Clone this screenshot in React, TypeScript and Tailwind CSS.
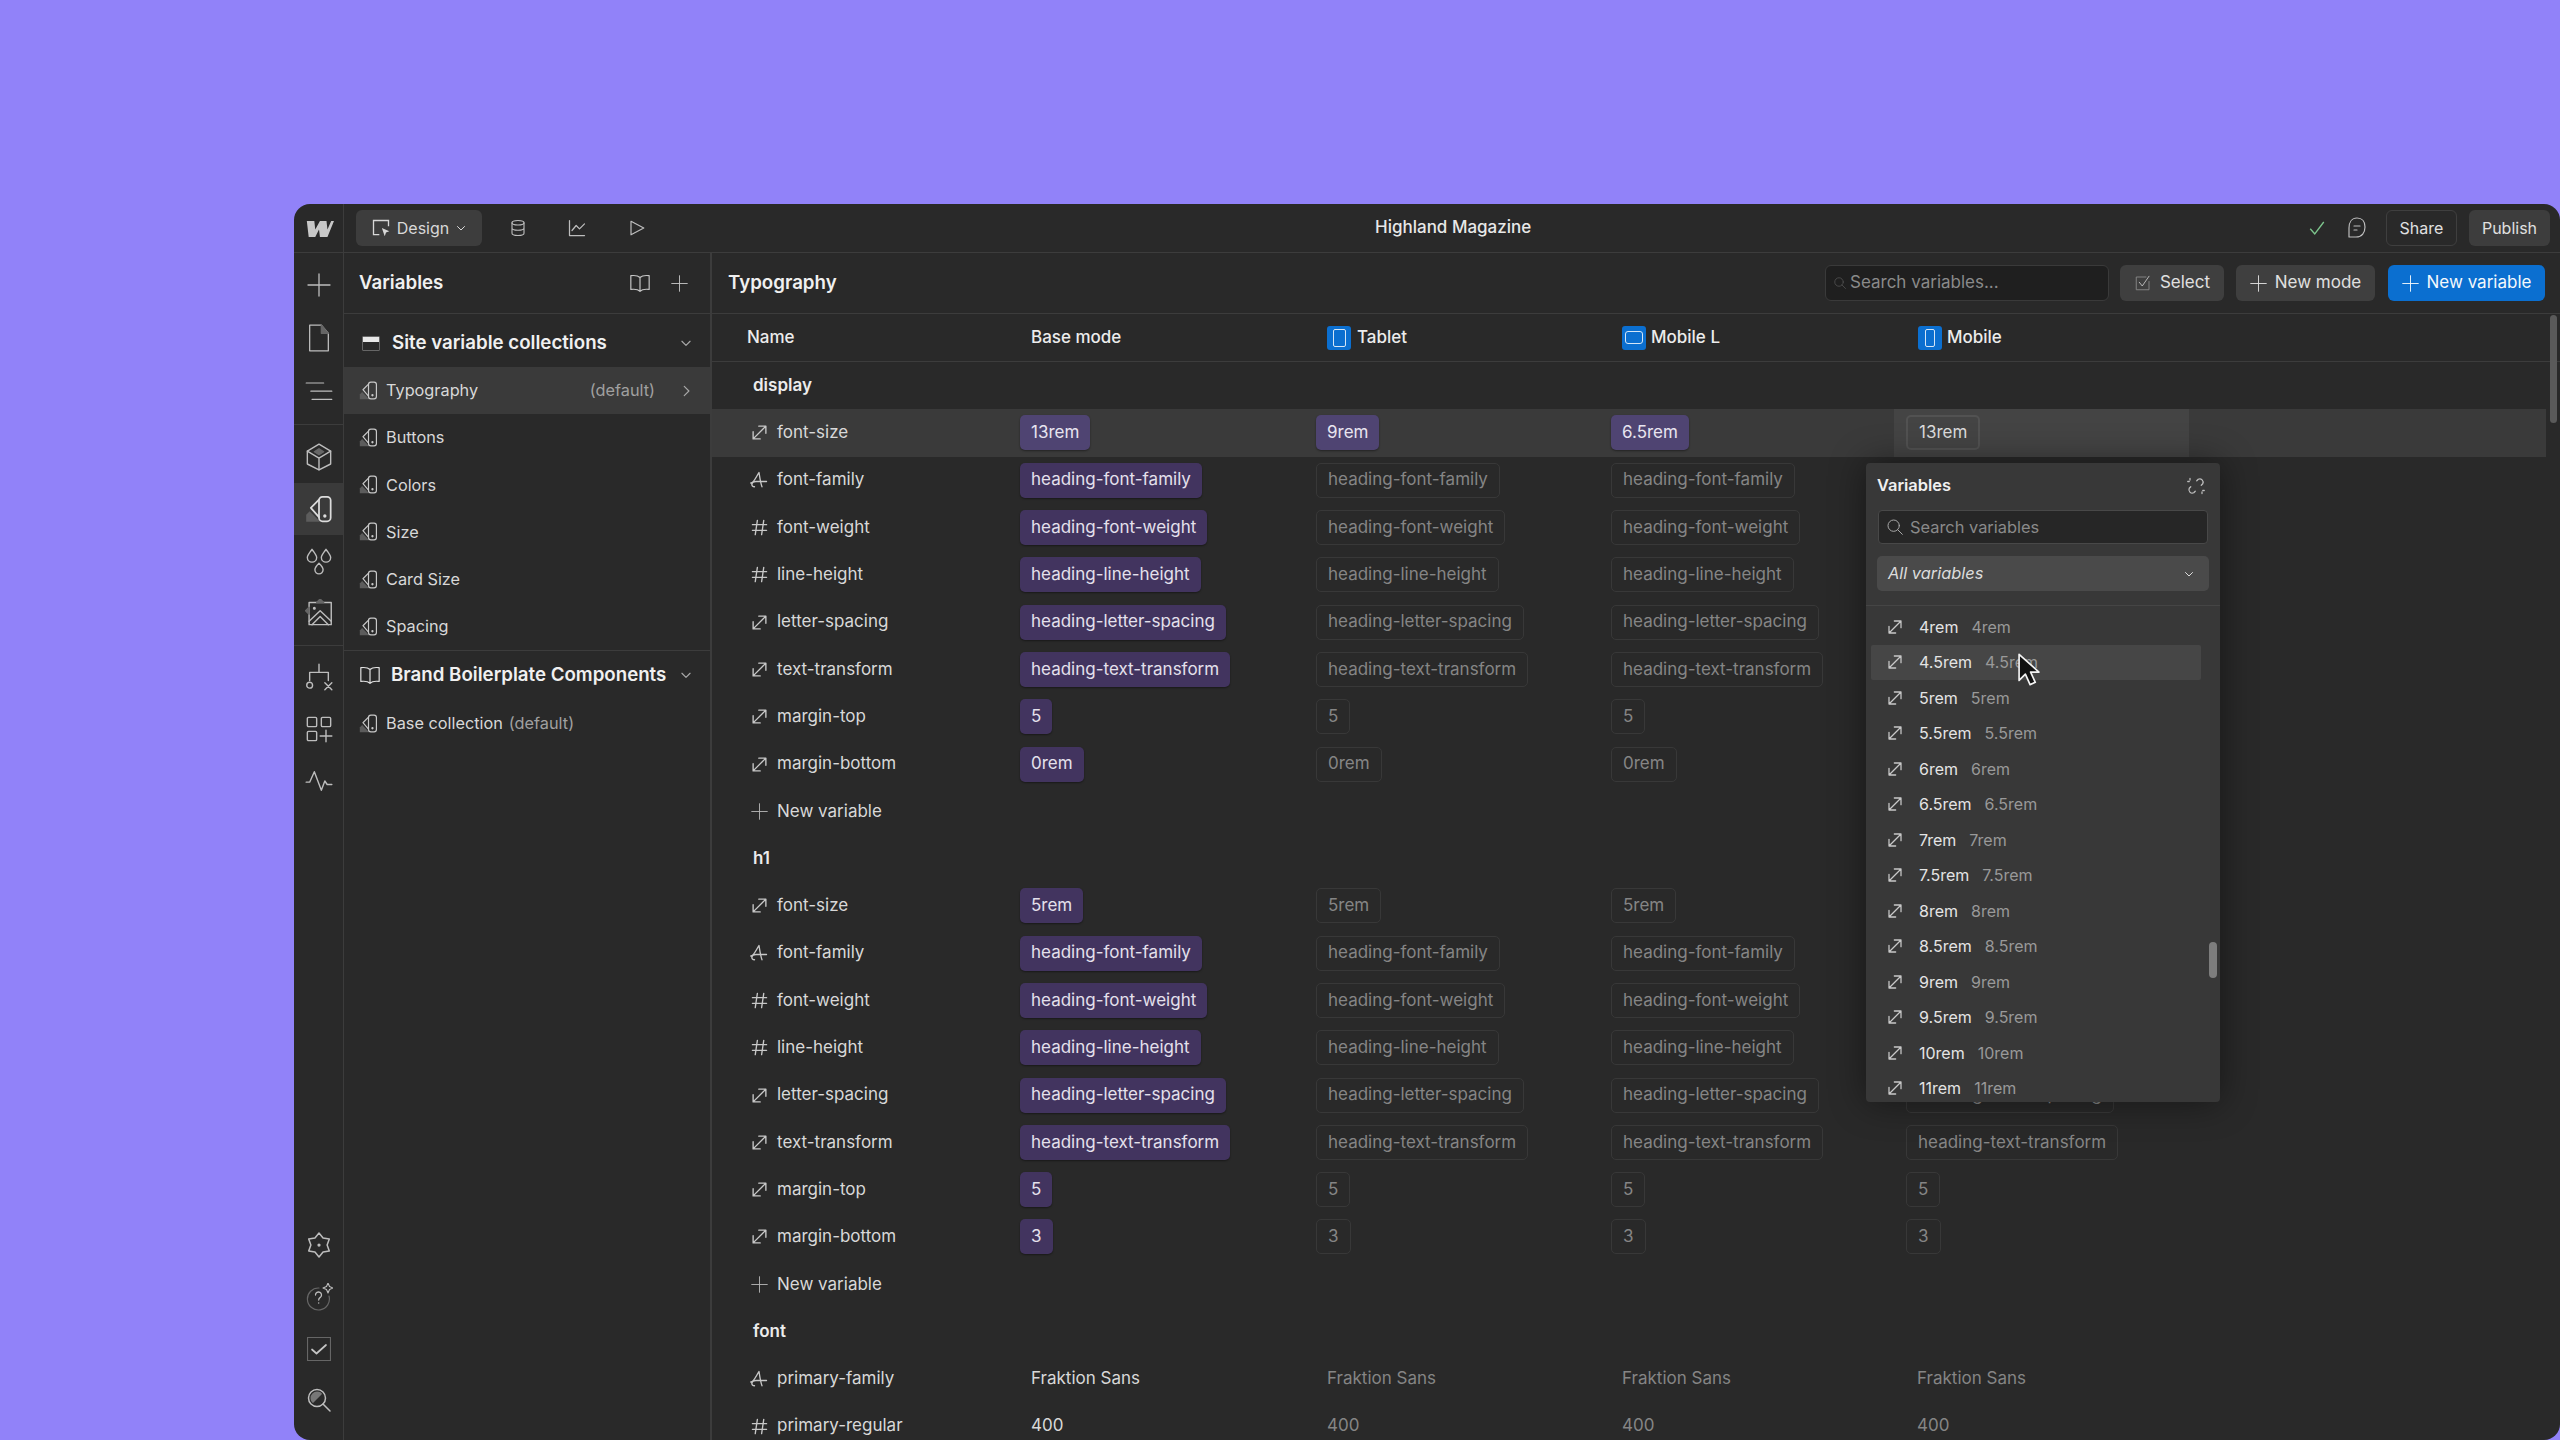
import { ReactNode } from 'react';

type IconProps = { className?: string };

const Svg = ({ className = 'w-6 h-6', sw = 1.3, children }: { className?: string; sw?: number; children: ReactNode }) => (
  <svg viewBox="0 0 24 24" fill="none" stroke="currentColor" strokeWidth={sw} strokeLinecap="round" strokeLinejoin="round" className={className}>
    {children}
  </svg>
);

const PlusIcon = ({ className }: IconProps) => (
  <Svg className={className}><path d="M12 1v22M1 12h22" /></Svg>
);
const ChevronDown = ({ className = 'w-3 h-3' }: IconProps) => (
  <Svg className={className} sw={2}><path d="M5 9l7 7 7-7" /></Svg>
);
const ChevronRight = ({ className = 'w-3 h-3' }: IconProps) => (
  <Svg className={className} sw={2}><path d="M9 4l8 8-8 8" /></Svg>
);
const SizeIcon = ({ className = 'w-[17px] h-[17px]' }: IconProps) => (
  <Svg className={className} sw={1.9}><path d="M3 21L21 3M11 3h10v10M3 11v10h10" /></Svg>
);
const FontIcon = ({ className = 'w-[18px] h-[18px]' }: IconProps) => (
  <Svg className={className} sw={1.8}><path d="M1 16c4 0 6-6 11-14 1 6 2 14 4 19M6 21c-5 0-5-7 2-7h14" /></Svg>
);
const HashIcon = ({ className = 'w-[17px] h-[17px]' }: IconProps) => (
  <Svg className={className} sw={1.9}><path d="M2 8h20M2 16h20M9 2L6 22M18 2l-3 20" /></Svg>
);
const SwatchIcon = ({ className = 'w-[19px] h-[19px]' }: IconProps) => (
  <Svg className={className} sw={1.5}>
    <path d="M1 23v-6l3-3 9 9z" fill="#5c5c5c" stroke="none" />
    <rect x="12" y="1.500" width="10" height="21" rx="3" />
    <path d="M12 4L5 11l7 8" />
    <circle cx="17" cy="18" r="0.7" fill="currentColor" />
  </Svg>
);
const BookIcon = ({ className = 'w-[22px] h-[22px]' }: IconProps) => (
  <Svg className={className}><path d="M12 6C10 4 6 3.500 2 4v15c4-.5 8 0 10 2 2-2 6-2.500 10-2V4c-4-.5-8 0-10 2zM12 6v15" /></Svg>
);
const CursorRect = ({ className = 'w-5 h-5' }: IconProps) => (
  <svg viewBox="0 0 24 24" fill="none" className={className}>
    <path d="M10 20H3V3h18v7" stroke="currentColor" strokeWidth="1.600" />
    <path d="M13 12l9 4-4 1.500-1.500 4.500z" fill="currentColor" />
  </svg>
);
const DbIcon = ({ className = 'w-[18px] h-[18px]' }: IconProps) => (
  <Svg className={className} sw={1.5}>
    <ellipse cx="12" cy="5" rx="8" ry="3" />
    <path d="M4 5v14c0 1.700 3.600 3 8 3s8-1.300 8-3V5M4 12c0 1.700 3.600 3 8 3s8-1.300 8-3" />
  </Svg>
);
const ChartIcon = ({ className = 'w-[20px] h-[20px]' }: IconProps) => (
  <Svg className={className} sw={1.5}><path d="M3 3v18h18M6 15l5-6 4 4 6-6" /></Svg>
);
const PlayIcon = ({ className = 'w-[18px] h-[18px]' }: IconProps) => (
  <Svg className={className} sw={1.6}><path d="M4 3l17 9-17 9z" /></Svg>
);
const FileIcon = ({ className = 'w-7 h-7' }: IconProps) => (
  <Svg className={className} sw={1.1}>
    <path d="M4 1h10l6 7v15H4z" />
    <path d="M14 1v7h6z" fill="#666" stroke="#666" />
  </Svg>
);
const ListIcon = ({ className = 'w-7 h-7' }: IconProps) => (
  <Svg className={className} sw={1}><path d="M1 6h15M5 13h18M6 20h17" /></Svg>
);
const BoxIcon = ({ className = 'w-7 h-7' }: IconProps) => (
  <Svg className={className} sw={1.2}>
    <path d="M12 1l10 6v11l-10 5-10-5V7z" />
    <path d="M2 7l10 6 10-6M12 13v10" />
    <path d="M12 5l4 2.500-4 2.500-4-2.500z" fill="#666" stroke="#666" />
  </Svg>
);
const DropsIcon = ({ className = 'w-7 h-7' }: IconProps) => (
  <Svg className={className} sw={1.2}>
    <path d="M6 2c-2 3-4 5-4 7a4 4 0 008 0c0-2-2-4-4-7zM18 2c-2 3-4 5-4 7a4 4 0 008 0c0-2-2-4-4-7zM12 14c-2 2-3.500 4-3.500 5.500a3.500 3.500 0 007 0c0-1.500-1.500-3.500-3.500-5.500z" />
  </Svg>
);
const ImageIcon = ({ className = 'w-7 h-7' }: IconProps) => (
  <Svg className={className} sw={1.2}>
    <path d="M3.500 3h19v19h-19z" />
    <path d="M3.500 19L13 10l9.500 9M6 22l7-7 7 7" />
    <circle cx="8" cy="8" r="0.7" fill="currentColor" />
    <path d="M0.500 10l3-3v6zM10 3l3-3 3 3z" fill="#666" stroke="#666" />
  </Svg>
);
const FlowIcon = ({ className = 'w-7 h-7' }: IconProps) => (
  <Svg className={className} sw={1.2}>
    <path d="M12 1v7M4 15v-7h16v7" />
    <circle cx="4" cy="19" r="2.500" />
    <path d="M17 17l6 6M23 17l-6 6" />
  </Svg>
);
const CompsIcon = ({ className = 'w-7 h-7' }: IconProps) => (
  <Svg className={className} sw={1.2}>
    <rect x="2" y="2" width="8" height="8" rx="1" />
    <rect x="14" y="2" width="8" height="8" rx="1" />
    <rect x="2" y="14" width="8" height="8" rx="1" />
    <path d="M18 13v10M13 18h10" />
  </Svg>
);
const PulseIcon = ({ className = 'w-7 h-7' }: IconProps) => (
  <Svg className={className} sw={1.2}><path d="M1 13h3l4-9 6 16 3-8 2 3h4" /></Svg>
);
const GearIcon = ({ className = 'w-[26px] h-[26px]' }: IconProps) => (
  <Svg className={className} sw={1.4}>
    <path d="M12 1l3.750 4.500L21.500 6.500 19.500 12l2 5.500-5.750 1L12 23l-3.750-4.500-5.750-1L4.500 12l-2-5.500 5.750-1z" />
    <circle cx="12" cy="12" r="0.8" fill="currentColor" />
  </Svg>
);
const HelpIcon = ({ className = 'w-7 h-7' }: IconProps) => (
  <svg viewBox="0 0 28 28" fill="none" strokeLinecap="round" strokeLinejoin="round" className={className}>
    <path d="M14 5a11 11 0 1 0 10 8" stroke="#666" strokeWidth="1.200" />
    <path d="M10.500 12a3 3 0 1 1 4.500 2.600c-1 .6-1.300 1.200-1.300 2.400" stroke="#bdbdbd" strokeWidth="1.300" />
    <circle cx="13.700" cy="20" r="0.7" fill="#bdbdbd" />
    <path d="M23 0l1.500 3.500L28 5l-3.500 1.500L23 10l-1.500-3.500L18 5l3.500-1.500z" stroke="#bdbdbd" strokeWidth="1.100" />
  </svg>
);
const CheckBoxIcon = ({ className = 'w-[24px] h-[24px]' }: IconProps) => (
  <Svg className={className} sw={1.2}>
    <rect x="0.500" y="0.500" width="23" height="23" stroke="#666" />
    <path d="M5 12.500l4.500 4L19 8" stroke="#c4c4c4" strokeWidth="1.700" />
  </Svg>
);
const SearchIcon = ({ className = 'w-6 h-6' }: IconProps) => (
  <Svg className={className} sw={1.5}>
    <circle cx="10" cy="10" r="8.500" />
    <path d="M16 16l7 7" />
  </Svg>
);
const ZoomIcon = ({ className = 'w-6 h-6' }: IconProps) => (
  <Svg className={className} sw={1.5}>
    <circle cx="10" cy="10" r="8.500" />
    <path d="M3.500 10a6.500 6.500 0 0 1 6.500-6.500c3 0 4.500 1 5 2.500L6 15c-1.500-1-2.500-3-2.500-5z" fill="#777" stroke="none" />
    <path d="M16 16l7 7" />
  </Svg>
);
const CommentIcon = ({ className = 'w-[24px] h-[24px]' }: IconProps) => (
  <Svg className={className} sw={1.2}>
    <path d="M12 2c5 0 8 3.500 8 9s-3 10-9 10H4v-9c0-6 3-10 8-10z" />
    <path d="M9 10h6M9 14h3" />
  </Svg>
);
const UnlinkIcon = ({ className = 'w-[18px] h-[18px]' }: IconProps) => (
  <Svg className={className} sw={1.7}>
    <path d="M13 5l2-2a4.500 4.500 0 0 1 6 6l-2 2M11 19l-2 2a4.500 4.500 0 0 1-6-6l2-2" />
    <path d="M4 2v2M1 6h2M20 22v-2M23 18h-2" />
  </Svg>
);
const SelectIcon = ({ className = 'w-[18px] h-[18px]' }: IconProps) => (
  <Svg className={className} sw={1.2}>
    <path d="M20 10v11H3V4h13" stroke="#8a8a8a" />
    <path d="M7 11l4 5 9-13" stroke="#c4c4c4" />
  </Svg>
);
const LogoMark = () => (
  <svg viewBox="0 0 32 20" className="h-[19px] w-[30px]" fill="#c8c8c8">
    <path d="M3 2h8l1 9 5-9h7l1 9 4-9h3l-7 17h-8l-1-8-4 8H5z" />
  </svg>
);

const DeviceBadge = ({ kind }: { kind: 'tablet' | 'landscape' | 'mobile' }) => (
  <span className="flex h-6 w-6 items-center justify-center rounded-[3px] bg-[#0b6fd0]">
    {kind === 'tablet' && <span className="h-[18px] w-[13px] rounded-[2px] border-[1.5px] border-[#d4e6f7]" />}
    {kind === 'landscape' && <span className="h-[13px] w-[18px] rounded-[3px] border-[1.5px] border-[#d4e6f7]" />}
    {kind === 'mobile' && <span className="h-[18px] w-[10px] rounded-[2px] border-[1.5px] border-[#d4e6f7]" />}
  </span>
);

type Kind = 'size' | 'font' | 'num';

const TypeIcon = ({ kind }: { kind: Kind }) => (
  <span className="flex w-[18px] shrink-0 justify-center text-[#c8c8c8]">
    {kind === 'size' && <SizeIcon />}
    {kind === 'font' && <FontIcon />}
    {kind === 'num' && <HashIcon />}
  </span>
);

const Pill = ({ text, variant }: { text: string; variant: 'set' | 'setHi' | 'ghost' | 'active' }) => {
  const styles = {
    set: 'bg-[#42345f] text-[#e4e0ec] shadow-[0_1px_2px_rgba(0,0,0,0.4)]',
    setHi: 'bg-[#4f4472] text-[#e8e4f0] shadow-[0_1px_2px_rgba(0,0,0,0.4)]',
    ghost: 'border border-[#383838] text-[#858585]',
    active: 'border-2 border-[#525252] text-[#dcdcdc]',
  };
  return (
    <span className={`inline-flex h-[35px] items-center rounded-[5px] px-[11px] ${styles[variant]}`}>{text}</span>
  );
};

type Row = { name: string; kind: Kind; vals: string[] };

const headingRows = (size: string[], top: string, bottom: string[]): Row[] => [
  { name: 'font-size', kind: 'size', vals: size },
  { name: 'font-family', kind: 'font', vals: Array(4).fill('heading-font-family') },
  { name: 'font-weight', kind: 'num', vals: Array(4).fill('heading-font-weight') },
  { name: 'line-height', kind: 'num', vals: Array(4).fill('heading-line-height') },
  { name: 'letter-spacing', kind: 'size', vals: Array(4).fill('heading-letter-spacing') },
  { name: 'text-transform', kind: 'size', vals: Array(4).fill('heading-text-transform') },
  { name: 'margin-top', kind: 'size', vals: Array(4).fill(top) },
  { name: 'margin-bottom', kind: 'size', vals: bottom },
];

const displayRows = headingRows(['13rem', '9rem', '6.5rem', '13rem'], '5', Array(4).fill('0rem'));
const h1Rows = headingRows(Array(4).fill('5rem'), '5', Array(4).fill('3'));

const GroupRow = ({ label }: { label: string }) => (
  <div className="flex h-[47.3px] items-center pl-[41px] font-semibold text-[#ececec]">{label}</div>
);

const NewVariableRow = () => (
  <div className="flex h-[47.3px] items-center gap-[9px] pl-[38px] text-[#d8d8d8]">
    <span className="flex w-[18px] justify-center text-[#b5b5b5]"><PlusIcon className="h-[17px] w-[17px]" /></span>
    New variable
  </div>
);

const PillRow = ({ row, active }: { row: Row; active?: boolean }) => (
  <div className={`grid h-[47.3px] grid-cols-[308px_296px_295px_295px_1fr] items-center ${active ? 'bg-[#3a3a3a]' : ''}`}>
    <div className="flex items-center gap-[9px] pl-[38px] text-[#d8d8d8]">
      <TypeIcon kind={row.kind} />
      {row.name}
    </div>
    {row.vals.map((v, i) => {
      const isActive = active && i === 3;
      return (
        <div key={i} className={isActive ? '-ml-[12px] flex h-[47.3px] w-[295px] items-center bg-[#444444] pl-[12px]' : ''}>
          <Pill text={v} variant={isActive ? 'active' : i === 0 || active ? (active ? 'setHi' : 'set') : 'ghost'} />
        </div>
      );
    })}
  </div>
);

const PlainRow = ({ name, kind, val }: { name: string; kind: Kind; val: string }) => (
  <div className="grid h-[47.3px] grid-cols-[308px_296px_295px_295px_1fr] items-center">
    <div className="flex items-center gap-[9px] pl-[38px] text-[#d8d8d8]">
      <TypeIcon kind={kind} />
      {name}
    </div>
    <div className="pl-[11px] text-[#d8d8d8]">{val}</div>
    <div className="pl-[11px] text-[#858585]">{val}</div>
    <div className="pl-[11px] text-[#858585]">{val}</div>
    <div className="pl-[11px] text-[#858585]">{val}</div>
  </div>
);

const collections = ['Buttons', 'Colors', 'Size', 'Card Size', 'Spacing'];
const remValues = ['4rem', '4.5rem', '5rem', '5.5rem', '6rem', '6.5rem', '7rem', '7.5rem', '8rem', '8.5rem', '9rem', '9.5rem', '10rem', '11rem'];

export default function App() {
  return (
    <div className="h-[1440px] overflow-hidden bg-[#9182f9] pl-[294px] pt-[204px] text-[17px] [font-family:Inter,sans-serif]">
      <div className="flex h-[1236px] flex-col overflow-hidden rounded-2xl bg-[#292929] text-white">
        {/* top bar */}
        <header className="flex h-[49px] shrink-0 items-center border-b border-[#3c3c3c] text-[16px]">
          <div className="flex h-full w-[50px] shrink-0 items-center justify-center border-r border-[#3c3c3c]"><LogoMark /></div>
          <div className="flex w-[1031px] shrink-0 items-center pl-[12px] text-[#bdbdbd]">
            <div className="flex h-9 w-[126px] items-center justify-center gap-[6px] rounded-md bg-[#3d3d3d] text-[#d8d8d8]">
              <CursorRect />
              Design
              <ChevronDown className="h-3 w-3" />
            </div>
            <span className="ml-[27px]"><DbIcon /></span>
            <span className="ml-[40px]"><ChartIcon /></span>
            <span className="ml-[41px]"><PlayIcon /></span>
          </div>
          <div className="text-[17px] font-medium text-[#e8e8e8]">Highland Magazine</div>
          <div className="ml-auto flex items-center pr-[10px]">
            <svg viewBox="0 0 24 24" fill="none" stroke="#7cc48c" strokeWidth="1.800" className="h-[18px] w-[18px]"><path d="M3 13l6 7L21 4" /></svg>
            <span className="ml-[19px] text-[#bdbdbd]"><CommentIcon /></span>
            <div className="ml-[17px] flex h-9 w-[71px] items-center justify-center rounded-md border border-[#3f3f3f] text-[#e0e0e0]">Share</div>
            <div className="ml-[12px] flex h-9 w-[81px] items-center justify-center rounded-md bg-[#3d3d3d] text-[#e0e0e0]">Publish</div>
          </div>
        </header>

        <div className="flex min-h-0 flex-1">
          {/* icon rail */}
          <nav className="flex w-[50px] shrink-0 flex-col border-r border-[#3c3c3c] text-[#bdbdbd]">
            <div className="flex flex-col border-b border-[#3c3c3c] pb-[7px] pt-[6px]">
              <div className="flex h-[52.5px] items-center justify-center"><PlusIcon className="h-6 w-6" /></div>
              <div className="flex h-[52.5px] items-center justify-center"><FileIcon /></div>
              <div className="flex h-[52.5px] items-center justify-center"><ListIcon /></div>
            </div>
            <div className="flex flex-col border-b border-[#3c3c3c] py-[6px]">
              <div className="flex h-[52px] items-center justify-center"><BoxIcon /></div>
              <div className="flex h-[52px] items-center justify-center bg-[#3a3a3a] text-[#dcdcdc]"><SwatchIcon className="h-7 w-7" /></div>
              <div className="flex h-[52px] items-center justify-center"><DropsIcon /></div>
              <div className="flex h-[52px] items-center justify-center"><ImageIcon /></div>
            </div>
            <div className="flex flex-col py-[5px]">
              <div className="flex h-[52px] items-center justify-center"><FlowIcon /></div>
              <div className="flex h-[52px] items-center justify-center"><CompsIcon /></div>
              <div className="flex h-[52px] items-center justify-center"><PulseIcon /></div>
            </div>
            <div className="mt-auto flex flex-col pb-[14px]">
              <div className="flex h-[52px] items-center justify-center"><GearIcon /></div>
              <div className="flex h-[52px] items-center justify-center"><HelpIcon /></div>
              <div className="flex h-[51px] items-center justify-center"><CheckBoxIcon /></div>
              <div className="flex h-[52px] items-center justify-center"><ZoomIcon /></div>
            </div>
          </nav>

          {/* collections panel */}
          <aside className="flex w-[368px] shrink-0 flex-col border-r-2 border-[#3c3c3c] text-[16.3px]">
            <div className="flex h-[61px] items-center border-b border-[#3c3c3c] pl-[15px] pr-[22px]">
              <span className="text-[18.7px] font-semibold text-[#f0f0f0]">Variables</span>
              <span className="ml-auto text-[#c4c4c4]"><BookIcon /></span>
              <span className="ml-[20px] text-[#c4c4c4]"><PlusIcon className="h-[17px] w-[17px]" /></span>
            </div>
            <div className="flex h-[53px] items-center pl-[18px] pr-[17px] pt-[5px]">
              <span className="flex h-[15px] w-[18px] flex-col rounded-[1px] border border-[#666]"><span className="h-[5px] bg-[#e8e8e8]" /></span>
              <span className="ml-[12px] text-[18.7px] font-semibold text-[#f0f0f0]">Site variable collections</span>
              <ChevronDown className="ml-auto h-[14px] w-[14px] text-[#a8a8a8]" />
            </div>
            <div className="flex h-[47px] items-center bg-[#3a3a3a] pl-[15px] pr-[17px] text-[#d8d8d8]">
              <span className="text-[#c8c8c8]"><SwatchIcon /></span>
              <span className="ml-[8px]">Typography</span>
              <span className="ml-auto text-[#a0a0a0]">(default)</span>
              <ChevronRight className="ml-[24px] h-[14px] w-[14px] text-[#a8a8a8]" />
            </div>
            {collections.map((c) => (
              <div key={c} className="flex h-[47.2px] items-center pl-[15px] text-[#d8d8d8]">
                <span className="text-[#c8c8c8]"><SwatchIcon /></span>
                <span className="ml-[8px]">{c}</span>
              </div>
            ))}
            <div className="flex h-[49px] items-center border-t border-[#3c3c3c] pl-[15px] pr-[17px]">
              <span className="text-[#e0e0e0]"><BookIcon /></span>
              <span className="ml-[10px] text-[18.7px] font-semibold text-[#f0f0f0]">Brand Boilerplate Components</span>
              <ChevronDown className="ml-auto h-[14px] w-[14px] text-[#a8a8a8]" />
            </div>
            <div className="flex h-[49px] items-center pl-[15px] text-[#d8d8d8]">
              <span className="text-[#c8c8c8]"><SwatchIcon /></span>
              <span className="ml-[8px]">Base collection</span>
              <span className="ml-[6px] text-[#a0a0a0]">(default)</span>
            </div>
          </aside>

          {/* variables table */}
          <main className="relative min-w-0 flex-1">
            <div className="flex h-[61px] items-center border-b border-[#3c3c3c] pl-[16px] pr-[15px]">
              <h1 className="text-[18.7px] font-semibold text-[#f0f0f0]">Typography</h1>
              <div className="ml-auto flex h-9 w-[284px] items-center gap-[4px] rounded-md border border-[#3a3a3a] bg-[#1f1f1f] pl-[8px] text-[#8a8a8a]">
                <SearchIcon className="h-3 w-3 text-[#555]" />
                Search variables...
              </div>
              <div className="ml-[11px] flex h-9 w-[104px] items-center justify-center gap-[8px] rounded-md bg-[#3f3f3f] text-[#e0e0e0]"><SelectIcon />Select</div>
              <div className="ml-[12px] flex h-9 w-[139px] items-center justify-center gap-[8px] rounded-md bg-[#3f3f3f] text-[#e0e0e0]"><PlusIcon className="h-[17px] w-[17px]" />New mode</div>
              <div className="ml-[13px] flex h-9 w-[157px] items-center justify-center gap-[8px] rounded-md bg-[#0b6fd0] text-[#f4f8fc]"><PlusIcon className="h-[17px] w-[17px]" />New variable</div>
            </div>
            <div className="grid h-[48px] grid-cols-[308px_296px_295px_295px_1fr] items-center border-b border-[#3c3c3c] font-medium text-[#ececec]">
              <div className="pl-[35px]">Name</div>
              <div className="pl-[11px]">Base mode</div>
              <div className="flex items-center gap-[6px] pl-[11px]"><DeviceBadge kind="tablet" />Tablet</div>
              <div className="flex items-center gap-[5px] pl-[11px]"><DeviceBadge kind="landscape" />Mobile L</div>
              <div className="flex items-center gap-[5px] pl-[12px]"><DeviceBadge kind="mobile" />Mobile</div>
            </div>
            <div className="pr-[14px]">
              <GroupRow label="display" />
              {displayRows.map((r, i) => <PillRow key={r.name} row={r} active={i === 0} />)}
              <NewVariableRow />
              <GroupRow label="h1" />
              {h1Rows.map((r) => <PillRow key={r.name} row={r} />)}
              <NewVariableRow />
              <GroupRow label="font" />
              <PlainRow name="primary-family" kind="font" val="Fraktion Sans" />
              <PlainRow name="primary-regular" kind="num" val="400" />
            </div>

            {/* page scrollbar */}
            <div className="absolute right-[3px] top-[62px] h-[108px] w-[7px] rounded-full bg-[#5a5a5a]" />

            {/* variables popover */}
            <div className="absolute left-[1154px] top-[210px] flex h-[639px] w-[354px] flex-col overflow-hidden rounded-[4px] bg-[#383838] text-[16.4px] shadow-[0_0_36px_rgba(0,0,0,0.45)]">
              <div className="flex h-[47px] shrink-0 items-center justify-between pb-[2px] pl-[11px] pr-[15px]">
                <span className="font-semibold text-[#f0f0f0]">Variables</span>
                <span className="text-[#bdbdbd]"><UnlinkIcon /></span>
              </div>
              <div className="mx-[12px] flex h-[34px] shrink-0 items-center gap-[7px] rounded-[4px] border border-[#484848] bg-[#262626] pl-[8px] text-[#8a8a8a]">
                <SearchIcon className="h-[16px] w-[16px] text-[#a8a8a8]" />
                Search variables
              </div>
              <div className="mx-[11px] mt-[12px] flex h-[35px] shrink-0 items-center justify-between rounded-[5px] bg-[#4a4a4a] pl-[11px] pr-[14px] italic text-[#dcdcdc]">
                All variables
                <ChevronDown className="h-[12px] w-[12px]" />
              </div>
              <div className="mt-[14px] min-h-0 flex-1 border-t border-[#454545] pt-[3px] text-[16px]">
                {remValues.map((v) => (
                  <div key={v} className={`mx-[5px] flex h-[35.5px] w-[330px] items-center rounded-[2px] pl-[16px] ${v === '4.5rem' ? 'bg-[#464646]' : ''}`}>
                    <span className="text-[#c8c8c8]"><SizeIcon className="h-[16px] w-[16px]" /></span>
                    <span className="ml-[16px] text-[#e4e4e4]">{v}</span>
                    <span className="ml-[13px] text-[#999]">{v}</span>
                  </div>
                ))}
              </div>
              <div className="absolute right-[3px] top-[479px] h-[36px] w-[8px] rounded-full bg-[#7d7d7d]" />
            </div>

            {/* mouse pointer */}
            <svg viewBox="0 0 22 32" className="absolute left-[1305px] top-[400px] h-[34px] w-[23px]">
              <path d="M2 1v25l6-6 4.500 10 5-2.200L13 18h8z" fill="#111" stroke="#f4f4f4" strokeWidth="1.600" strokeLinejoin="round" />
            </svg>
          </main>
        </div>
      </div>
    </div>
  );
}
